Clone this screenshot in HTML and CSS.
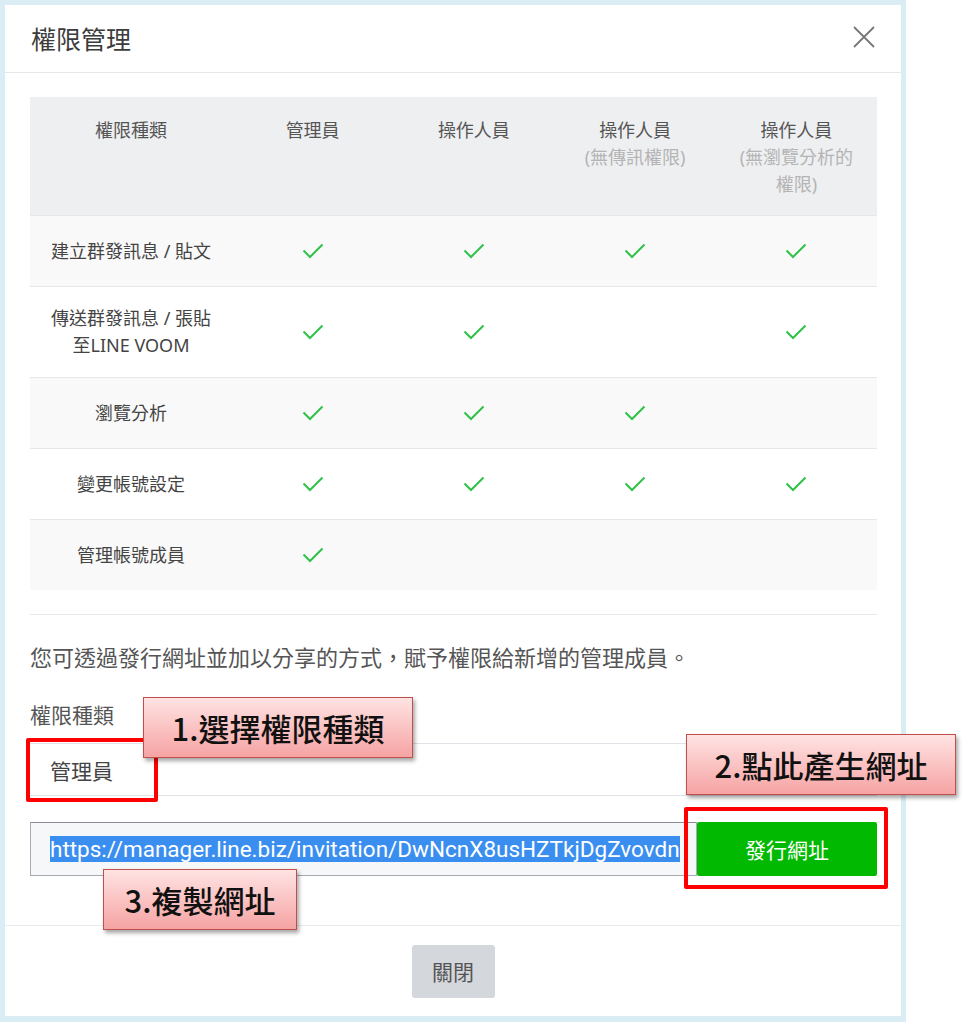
FILE: index.html
```html
<!DOCTYPE html>
<html lang="zh-Hant">
  <head>
    <meta charset="UTF-8" />
    <meta name="viewport" content="width=device-width, initial-scale=1.0" />
    <link rel="stylesheet" href="styles.css">
    <title>權限管理</title>
  </head>
  <body>
    <div class="frame">
      <div class="modal">
        <div class="modal-header">
          <h2 class="modal-title">權限管理</h2>
          <button class="close-x" aria-label="close">
            <svg width="22" height="22" viewBox="0 0 22 22"><path d="M1 1 L21 21 M21 1 L1 21" stroke="#777" stroke-width="1.8" fill="none"/></svg>
          </button>
        </div>

        <div class="modal-body">
          <table class="perm-table">
            <colgroup>
              <col class="col-name">
              <col><col><col><col>
            </colgroup>
            <thead>
              <tr>
                <th>權限種類</th>
                <th>管理員</th>
                <th>操作人員</th>
                <th>操作人員<span class="sub">(無傳訊權限)</span></th>
                <th>操作人員<span class="sub">(無瀏覽分析的權限)</span></th>
              </tr>
            </thead>
            <tbody>
              <tr>
                <td>建立群發訊息 / 貼文</td>
                <td><svg class="check" viewBox="0 0 22 16"><path d="M1.5 7.5 L8 14 L20.5 1.5"/></svg></td>
                <td><svg class="check" viewBox="0 0 22 16"><path d="M1.5 7.5 L8 14 L20.5 1.5"/></svg></td>
                <td><svg class="check" viewBox="0 0 22 16"><path d="M1.5 7.5 L8 14 L20.5 1.5"/></svg></td>
                <td><svg class="check" viewBox="0 0 22 16"><path d="M1.5 7.5 L8 14 L20.5 1.5"/></svg></td>
              </tr>
              <tr>
                <td>傳送群發訊息 / 張貼<br>至LINE VOOM</td>
                <td><svg class="check" viewBox="0 0 22 16"><path d="M1.5 7.5 L8 14 L20.5 1.5"/></svg></td>
                <td><svg class="check" viewBox="0 0 22 16"><path d="M1.5 7.5 L8 14 L20.5 1.5"/></svg></td>
                <td></td>
                <td><svg class="check" viewBox="0 0 22 16"><path d="M1.5 7.5 L8 14 L20.5 1.5"/></svg></td>
              </tr>
              <tr>
                <td>瀏覽分析</td>
                <td><svg class="check" viewBox="0 0 22 16"><path d="M1.5 7.5 L8 14 L20.5 1.5"/></svg></td>
                <td><svg class="check" viewBox="0 0 22 16"><path d="M1.5 7.5 L8 14 L20.5 1.5"/></svg></td>
                <td><svg class="check" viewBox="0 0 22 16"><path d="M1.5 7.5 L8 14 L20.5 1.5"/></svg></td>
                <td></td>
              </tr>
              <tr>
                <td>變更帳號設定</td>
                <td><svg class="check" viewBox="0 0 22 16"><path d="M1.5 7.5 L8 14 L20.5 1.5"/></svg></td>
                <td><svg class="check" viewBox="0 0 22 16"><path d="M1.5 7.5 L8 14 L20.5 1.5"/></svg></td>
                <td><svg class="check" viewBox="0 0 22 16"><path d="M1.5 7.5 L8 14 L20.5 1.5"/></svg></td>
                <td><svg class="check" viewBox="0 0 22 16"><path d="M1.5 7.5 L8 14 L20.5 1.5"/></svg></td>
              </tr>
              <tr>
                <td>管理帳號成員</td>
                <td><svg class="check" viewBox="0 0 22 16"><path d="M1.5 7.5 L8 14 L20.5 1.5"/></svg></td>
                <td></td>
                <td></td>
                <td></td>
              </tr>
            </tbody>
          </table>

          <hr class="divider">

          <p class="desc">您可透過發行網址並加以分享的方式，賦予權限給新增的管理成員。</p>

          <div class="field-label">權限種類</div>
          <div class="select-box">管理員</div>

          <div class="url-row">
            <div class="url-input"><span class="url-selected">https://manager.line.biz/invitation/DwNcnX8usHZTkjDgZvovdn</span></div>
            <button class="issue-btn">發行網址</button>
          </div>
        </div>

        <div class="modal-footer">
          <button class="close-btn">關閉</button>
        </div>
      </div>

      <!-- tutorial annotations drawn over the dialog -->
      <div class="mark mark-select"></div>
      <div class="mark mark-issue"></div>
      <div class="note note-1">1.選擇權限種類</div>
      <div class="note note-2">2.點此產生網址</div>
      <div class="note note-3">3.複製網址</div>
    </div>
  </body>
</html>
```

FILE: styles.css
```css
*,
*::after,
*::before {
  box-sizing: border-box;
}

body {
  margin: 0;
  background-color: white;
  font-family: "Noto Sans", "Noto Sans CJK TC", sans-serif;
  color: #444;
}

.frame {
  position: relative;
  width: 906px;
  height: 1022px;
  padding: 5px 5px 0 5px;
  background-color: #daecf4;
}

.modal {
  height: 1011px;
  background-color: white;
  display: flex;
  flex-direction: column;
}

.modal-header {
  height: 68px;
  padding: 0 26px 0 26px;
  display: flex;
  align-items: center;
  justify-content: space-between;
  border-bottom: 1px solid #e6e8ea;
}

.modal-title {
  margin: 0;
  font-family: "Noto Sans CJK TC", sans-serif;
  font-weight: normal;
  font-size: 25px;
  color: #3c3c3c;
  line-height: 32px;
  margin-top: -2px;
}

.close-x {
  border: none;
  background: none;
  padding: 0;
  width: 22px;
  height: 22px;
  margin-top: -4px;
  cursor: pointer;
}

.modal-body {
  padding: 24px 24px 0 25px;
  flex: 1;
}

.perm-table {
  width: 847px;
  border-collapse: collapse;
  table-layout: fixed;
  font-family: "Noto Sans", "Noto Sans CJK TC", sans-serif;
  font-size: 18px;
  line-height: 27px;
}

.col-name {
  width: 202px;
}

.perm-table th {
  background-color: #eeeff1;
  font-weight: normal;
  color: #555;
  vertical-align: top;
  padding: 20px 16px 17px;
  text-align: center;
}

.perm-table th .sub {
  display: block;
  color: #b4b4b4;
}

.perm-table td {
  box-sizing: content-box;
  height: 34px;
  padding: 18px 16px;
  text-align: center;
  vertical-align: middle;
  color: #444;
  border-top: 1px solid #e5e7ea;
}

.perm-table tbody tr:nth-child(odd) {
  background-color: #f9f9f9;
}

.check {
  display: block;
  margin: 0 auto;
  width: 22px;
  height: 16px;
  fill: none;
  stroke: #2fc148;
  stroke-width: 2;
}

.divider {
  margin: 24px 0 0;
  border: none;
  border-top: 1px solid #e6e8ea;
}

.desc {
  margin: 25px 0 0;
  font-family: "Noto Sans CJK TC", sans-serif;
  font-size: 22px;
  line-height: 32px;
  color: #555;
}

.field-label {
  margin-top: 26px;
  font-family: "Noto Sans CJK TC", sans-serif;
  font-size: 21px;
  line-height: 32px;
  color: #555;
}

.select-box {
  margin-top: 13px;
  height: 53px;
  padding: 0 20px;
  display: flex;
  align-items: center;
  border-top: 1px solid #dfe2e6;
  border-bottom: 1px solid #dfe2e6;
  font-family: "Noto Sans CJK TC", sans-serif;
  font-size: 21px;
  color: #444;
}

.url-row {
  margin-top: 26px;
  display: flex;
  height: 54px;
}

.url-input {
  flex: 1;
  display: flex;
  align-items: center;
  padding-left: 19px;
  background-color: #f6f7f8;
  border: 1px solid #a9abb2;
  border-top-color: #8a8c94;
  overflow: hidden;
  white-space: nowrap;
}

.url-selected {
  font-family: Roboto, sans-serif;
  font-size: 22.5px;
  line-height: 26px;
  background-color: #3a8ef0;
  color: white;
}

.issue-btn {
  width: 180px;
  border: none;
  border-radius: 2px;
  background-color: #00b900;
  color: white;
  font-family: "Noto Sans CJK TC", sans-serif;
  font-size: 21px;
  cursor: pointer;
}

.modal-footer {
  height: 91px;
  border-top: 1px solid #e8eaec;
  display: flex;
  justify-content: center;
  align-items: center;
}

.close-btn {
  width: 83px;
  height: 53px;
  border: none;
  border-radius: 3px;
  background-color: #d4d7dc;
  color: #555;
  font-family: "Noto Sans CJK TC", sans-serif;
  font-size: 21px;
  cursor: pointer;
}

.mark {
  position: absolute;
  border: 4px solid #ff0000;
  border-radius: 2px;
}

.mark-select {
  left: 26px;
  top: 738px;
  width: 132px;
  height: 64px;
}

.mark-issue {
  left: 684px;
  top: 807px;
  width: 204px;
  height: 82px;
}

.note {
  position: absolute;
  height: 61px;
  display: flex;
  align-items: center;
  justify-content: center;
  background: linear-gradient(#ffe3e3, #f6a3a3);
  border: 1.5px solid #c0504d;
  box-shadow: 2px 3px 4px rgba(0, 0, 0, 0.35);
  font-family: "Noto Sans CJK TC", sans-serif;
  font-weight: 500;
  font-size: 31px;
  color: #111;
}

.note-1 {
  left: 143px;
  top: 697px;
  width: 270px;
}

.note-2 {
  left: 686px;
  top: 734px;
  width: 270px;
}

.note-3 {
  left: 103px;
  top: 869px;
  width: 194px;
}
```
